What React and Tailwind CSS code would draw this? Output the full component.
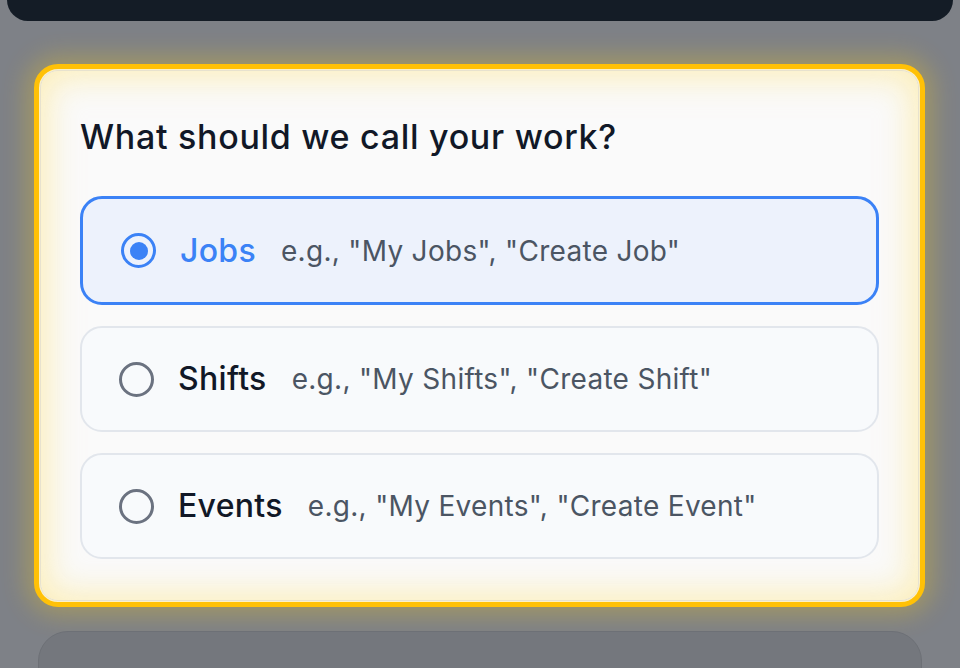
import { useState } from "react";

const OPTIONS = [
  { id: "jobs", label: "Jobs", hint: 'e.g., "My Jobs", "Create Job"' },
  { id: "shifts", label: "Shifts", hint: 'e.g., "My Shifts", "Create Shift"' },
  { id: "events", label: "Events", hint: 'e.g., "My Events", "Create Event"' },
];

const Radio = ({ checked }) => (
  <span
    className={`flex h-[35px] w-[35px] shrink-0 items-center justify-center rounded-full border-[3px] ${
      checked ? "border-[#3b82f6]" : "border-[#6b7280]"
    }`}
  >
    {checked && <span className="h-[18px] w-[18px] rounded-full bg-[#3b82f6]" />}
  </span>
);

const Option = ({ option, checked, onSelect }) => (
  <button
    type="button"
    onClick={() => onSelect(option.id)}
    className={`flex w-full items-center rounded-[22px] text-left ${
      checked
        ? "h-[109px] border-[3px] border-[#3b82f6] bg-[#edf2fc] pl-[38px]"
        : "h-[106px] border-2 border-[#e2e6ec] bg-[#f8fafc] pl-[37px]"
    }`}
  >
    <Radio checked={checked} />
    <span
      className={`ml-[24px] text-[32px] font-medium tracking-[0.3px] ${
        checked ? "text-[#3b82f6]" : "text-[#111827]"
      }`}
    >
      {option.label}
    </span>
    <span className="ml-[25px] text-[28px] tracking-[0.3px] text-[#4b5563]">
      {option.hint}
    </span>
  </button>
);

export default function App() {
  const [selected, setSelected] = useState("jobs");

  return (
    <div
      className="flex h-[668px] w-full flex-col overflow-hidden bg-[#7e8187]"
      style={{ fontFamily: "Inter, 'Noto Sans', sans-serif" }}
    >
      {/* tail of the header card above */}
      <div className="mx-[7px] h-[21px] shrink-0 rounded-b-[34px] bg-[#141c26]" />

      {/* highlighted step */}
      <div className="ml-[34px] mr-[35px] mt-[43px] shrink-0 rounded-[24px] border-[5px] border-[#ffc107] bg-[#fcf1c6] shadow-[0_0_24px_8px_rgba(240,200,30,0.32)]">
        <div className="m-px rounded-[18px] border border-[#e7e2cf] bg-[#fafafa] px-[39px] pb-[41px] pt-[44px] shadow-[inset_0_0_32px_8px_rgba(253,230,138,0.55)]">
          <h2 className="text-[34px] font-medium leading-[44px] tracking-[0.7px] text-[#111827]">
            What should we call your work?
          </h2>
          <div className="mt-[37px] flex flex-col gap-[21px]">
            {OPTIONS.map((o) => (
              <Option
                key={o.id}
                option={o}
                checked={selected === o.id}
                onSelect={setSelected}
              />
            ))}
          </div>
        </div>
      </div>

      {/* next step, dimmed */}
      <div className="mx-[38px] mt-[24px] h-[120px] shrink-0 rounded-[30px] border border-[#6d7076] bg-[#74777d]" />
    </div>
  );
}
